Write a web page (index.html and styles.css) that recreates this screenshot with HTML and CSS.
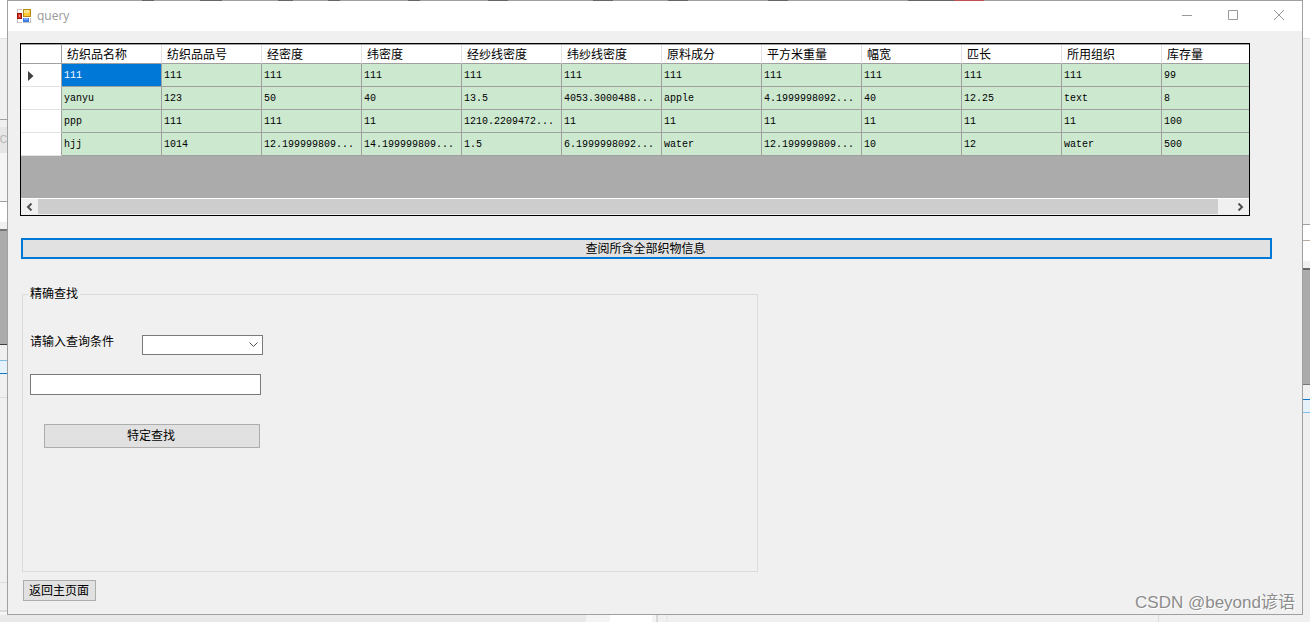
FILE: index.html
```html
<!DOCTYPE html>
<html lang="zh-CN">
<head>
<meta charset="utf-8">
<title>query</title>
<link rel="stylesheet" href="styles.css">
</head>
<body>
<div class="desktop">
  <div class="behind behind-left"><span class="behind-text">SC</span></div>
  <main class="window">
    <div class="window-edge"></div>
    <header class="titlebar">
      <svg class="app-icon" viewBox="0 0 14 14" width="14" height="14" aria-hidden="true">
        <rect x="0" y="0" width="14" height="14" fill="#c4c4c4"/>
        <path d="M1 1h4v3H1zM1 10h4v3H1zM12 9h1v4h-1z" fill="#fff"/>
        <rect x="0" y="4" width="5" height="6" fill="#9c1610"/>
        <rect x="1" y="5" width="3" height="4" fill="#d8352a"/>
        <rect x="2" y="6" width="1" height="2" fill="#f39083"/>
        <rect x="5" y="0" width="1" height="14" fill="#fff"/>
        <rect x="6" y="0" width="8" height="8" fill="#b88a12"/>
        <rect x="7" y="1" width="6" height="6" fill="#ffc938"/>
        <rect x="7" y="1" width="5" height="3" fill="#ffe58a"/>
        <rect x="5" y="8" width="9" height="1" fill="#fff"/>
        <rect x="6" y="9" width="6" height="4" fill="#3f7be0"/>
        <rect x="7" y="9" width="4" height="2" fill="#79a9f5"/>
      </svg>
      <span class="title">query</span>
      <div class="window-buttons">
        <button type="button" aria-label="Minimize"><svg width="12" height="12" viewBox="0 0 12 12"><path d="M1 5.500h10" /></svg></button>
        <button type="button" aria-label="Maximize"><svg width="12" height="12" viewBox="0 0 12 12"><path d="M1.500 .5h9v9h-9z" /></svg></button>
        <button type="button" aria-label="Close"><svg width="12" height="12" viewBox="0 0 12 12"><path d="M1 0l10 10M11 0L1 10" /></svg></button>
      </div>
    </header>
    <div class="client">
      <section class="grid">
        <div class="grid-view">
          <table>
            <colgroup><col class="col-head"><col span="12" class="col-data"></colgroup>
            <thead>
              <tr><th></th><th>纺织品名称</th><th>纺织品品号</th><th>经密度</th><th>纬密度</th><th>经纱线密度</th><th>纬纱线密度</th><th>原料成分</th><th>平方米重量</th><th>幅宽</th><th>匹长</th><th>所用组织</th><th>库存量</th></tr>
            </thead>
            <tbody>
              <tr><th><svg class="marker" width="6" height="10" viewBox="0 0 6 10"><path d="M0 0l5.500 5L0 10z" fill="#404040"/></svg></th><td class="selected">111</td><td>111</td><td>111</td><td>111</td><td>111</td><td>111</td><td>111</td><td>111</td><td>111</td><td>111</td><td>111</td><td>99</td></tr>
              <tr><th></th><td>yanyu</td><td>123</td><td>50</td><td>40</td><td>13.5</td><td>4053.3000488...</td><td>apple</td><td>4.1999998092...</td><td>40</td><td>12.25</td><td>text</td><td>8</td></tr>
              <tr><th></th><td>ppp</td><td>111</td><td>111</td><td>11</td><td>1210.2209472...</td><td>11</td><td>11</td><td>11</td><td>11</td><td>11</td><td>11</td><td>100</td></tr>
              <tr><th></th><td>hjj</td><td>1014</td><td>12.199999809...</td><td>14.199999809...</td><td>1.5</td><td>6.1999998092...</td><td>water</td><td>12.199999809...</td><td>10</td><td>12</td><td>water</td><td>500</td></tr>
            </tbody>
          </table>
        </div>
        <div class="scrollbar">
          <button type="button" aria-label="Scroll left"><svg width="7" height="8" viewBox="0 0 7 8"><path d="M5.500 .5L2 4l3.500 3.500"/></svg></button>
          <div class="track"><div class="thumb"></div></div>
          <button type="button" aria-label="Scroll right"><svg width="7" height="8" viewBox="0 0 7 8"><path d="M1.500 .5L5 4L1.500 7.500"/></svg></button>
        </div>
      </section>
      <button type="button" class="btn btn-all">查阅所含全部织物信息</button>
      <fieldset class="search">
        <legend>精确查找</legend>
        <div class="condition">
          <label for="field">请输入查询条件</label>
          <div class="combo">
            <select id="field"><option></option></select>
            <svg class="chevron" width="9" height="6" viewBox="0 0 9 6"><path d="M.5 .5l4 4l4-4"/></svg>
          </div>
        </div>
        <input type="text" class="keyword" aria-label="查询内容">
        <button type="button" class="btn btn-find">特定查找</button>
      </fieldset>
      <button type="button" class="btn btn-back">返回主页面</button>
    </div>
    <div class="watermark">CSDN @beyond谚语</div>
  </main>
  <div class="behind behind-right"></div>
  <div class="behind behind-bottom"></div>
</div>
</body>
</html>
```

FILE: styles.css
```css
* { box-sizing: border-box; }

body {
  margin: 0;
  background: #f0f0f0;
  color: #000;
  font: 12px/16px "Liberation Sans", "Noto Sans CJK SC", sans-serif;
}

button, input, select { font: inherit; color: inherit; margin: 0; border-radius: 0; }

.desktop {
  display: grid;
  grid-template-columns: 7px 1fr 7px;
  grid-template-rows: 1fr 7px;
  min-height: 100vh;
}

/* Other windows showing around the edges */
.behind { overflow: hidden; }

.behind-left {
  padding-top: 132px;
  background: linear-gradient(
    #fff 38px, #e0e0e0 38px 39px, #f0f0f0 39px 119px, #a0a0a0 119px 120px,
    #f0f0f0 120px 127px, #e6e6e6 127px 153px, #f5f5f5 153px 201px,
    #a0a0a0 201px 202px, #fff 202px 222px, #f0f0f0 222px 229px,
    #777 229px 231px, #ababab 231px 344px, #404040 344px 345px,
    #f0f0f0 345px 360px, #80bee8 360px 361px, #e5f1fb 361px 373px,
    #0b78ca 373px 374px, #f0f0f0 374px 397px, #dcdcdc 397px 398px,
    #f0f0f0 398px 582px, #dcdcdc 582px 583px, #f0f0f0 583px 610px,
    #dcdcdc 610px 612px, #f5f5f5 612px);
}

.behind-text {
  display: flex;
  justify-content: flex-end;
  color: #b4b4b4;
  font-size: 10px;
}

.behind-right {
  background: linear-gradient(
    #fff 38px, #e0e0e0 38px 39px, #f0f0f0 39px 224px, #a0a0a0 224px 225px,
    #fff 225px 240px, #b8a8a0 240px 241px, #fff 241px 261px,
    #f0f0f0 261px 268px, #666 268px 270px, #ababab 270px 384px,
    #777 384px 385px, #f0f0f0 385px 399px, #0b78ca 399px 400px,
    #e5f1fb 400px 412px, #80bee8 412px 413px, #f0f0f0 413px);
}

.behind-bottom {
  grid-column: 1 / -1;
  background: linear-gradient(to right,
    #e9e9e9 586px, #f4f4f4 586px 610px, #fff 610px 652px, #f4f4f4 652px 656px,
    #d8d8d8 656px 658px, #f0f0f0 658px 666px, #e8e8e8 666px 668px,
    #f0f0f0 668px 1158px, #dcdcdc 1158px 1159px, #f0f0f0 1159px);
}

.window {
  position: relative;
  display: flex;
  flex-direction: column;
  min-width: 0;
  border: solid #a0a0a0;
  border-width: 0 1px 1px;
  background: #f0f0f0;
}

.window-edge {
  height: 1px;
  background: linear-gradient(to right,
    #a0a0a0 134px, #666 134px 146px, #a0a0a0 146px 192px, #666 192px 214px,
    #a0a0a0 214px 270px, #666 270px 285px, #a0a0a0 285px 320px, #666 320px 332px,
    #a0a0a0 332px 400px, #666 400px 412px, #a0a0a0 412px 480px, #666 480px 500px,
    #a0a0a0 500px 585px, #666 585px 605px, #a0a0a0 605px 660px, #666 660px 680px,
    #a0a0a0 680px 760px, #666 760px 780px, #a0a0a0 780px 900px, #666 900px 946px,
    #c05050 946px 976px, #a0a0a0 976px);
}

.titlebar {
  display: flex;
  align-items: center;
  height: 30px;
  padding-left: 9px;
  gap: 6px;
  background: #fff;
}

.title {
  color: #999;
  font-family: "Open Sans", "Noto Sans", sans-serif;
}

.window-buttons { display: flex; height: 100%; margin-left: auto; }

.window-buttons button {
  display: grid;
  place-items: center;
  width: 46px;
  padding: 0;
  border: 0;
  background: none;
}

.window-buttons path { fill: none; stroke: #999; }

.client {
  display: flex;
  flex-direction: column;
  align-items: flex-start;
  padding: 12px 30px 12px 12px;
}

.grid {
  align-self: stretch;
  margin-right: 22px;
  border: 1px solid #000;
}

.grid-view {
  overflow: hidden;
  min-height: 154px;
  border-top: 1px solid #a0a0a0;
  background: #ababab;
}

table {
  width: 1241px;
  table-layout: fixed;
  border-spacing: 0;
}

.col-head { width: 41px; }
.col-data { width: 100px; }

th, td { padding: 0; text-align: left; font-weight: normal; white-space: nowrap; }

thead th {
  height: 19px;
  padding: 2px 0 0 5px;
  border-right: 1px solid #e3e3e3;
  border-bottom: 1px solid #a0a0a0;
  background: #fff;
}

tbody th {
  padding: 2px 0 0 7px;
  border-right: 1px solid #a0a0a0;
  border-bottom: 1px solid #e3e3e3;
  background: #fff;
}

thead th:first-child { border-right-color: #a0a0a0; }

td {
  height: 23px;
  padding: 2px 0 0 2px;
  border-right: 1px solid #a0a0a0;
  border-bottom: 1px solid #a0a0a0;
  background: #cce8cf;
  font: 10px/16px "Liberation Mono", monospace;
}

td.selected { background: #0078d7; color: #fff; }

.marker { display: block; }

.scrollbar {
  display: flex;
  height: 17px;
  border-top: 1px solid #fff;
  background: #f0f0f0;
}

.scrollbar button {
  display: grid;
  place-items: center;
  width: 17px;
  padding: 0;
  border: 0;
  background: none;
}

.scrollbar path { fill: none; stroke: #505050; stroke-width: 2; }

.track { flex: 1; padding: 0 2px 1px 0; }
.thumb { width: 99%; height: 100%; background: #cdcdcd; }

.btn {
  padding: 0;
  border: 1px solid #adadad;
  background: #e1e1e1;
  text-align: center;
}

.btn-all {
  align-self: stretch;
  height: 21px;
  margin: 22px 0 0 1px;
  padding: 1px 2px 0 0;
  border: 2px solid #0078d7;
}

.search {
  display: flex;
  flex-direction: column;
  align-items: flex-start;
  width: 100%;
  max-width: 736px;
  min-height: 286px;
  margin: 27px 0 0 2px;
  padding: 33px 7px 0;
  border: 1px solid #dcdcdc;
}

.search legend { margin-left: -2px; padding: 0 2px; }

.condition { display: flex; gap: 28px; }
.condition label { line-height: 14px; }

.combo { display: grid; align-items: center; }

.combo select {
  grid-area: 1 / 1;
  width: 121px;
  height: 20px;
  border: 1px solid #7a7a7a;
  background: #fff;
  appearance: none;
}

.chevron {
  z-index: 1;
  grid-area: 1 / 1;
  justify-self: end;
  margin-right: 5px;
  pointer-events: none;
}

.chevron path { fill: none; stroke: #505050; }

.keyword {
  width: 231px;
  height: 21px;
  margin-top: 19px;
  border: 1px solid #7a7a7a;
  background: #fff;
}

.btn-find {
  width: 216px;
  height: 24px;
  margin: 29px 0 0 14px;
  padding-right: 2px;
}

.btn-back {
  height: 21px;
  margin: 8px 0 0 3px;
  padding: 0 6px 0 5px;
}

.watermark {
  position: absolute;
  right: 7px;
  bottom: 0;
  color: #8c8c8c;
  font-size: 17px;
  line-height: 22px;
  text-shadow: 1px 1px 0 #fff;
}
```
